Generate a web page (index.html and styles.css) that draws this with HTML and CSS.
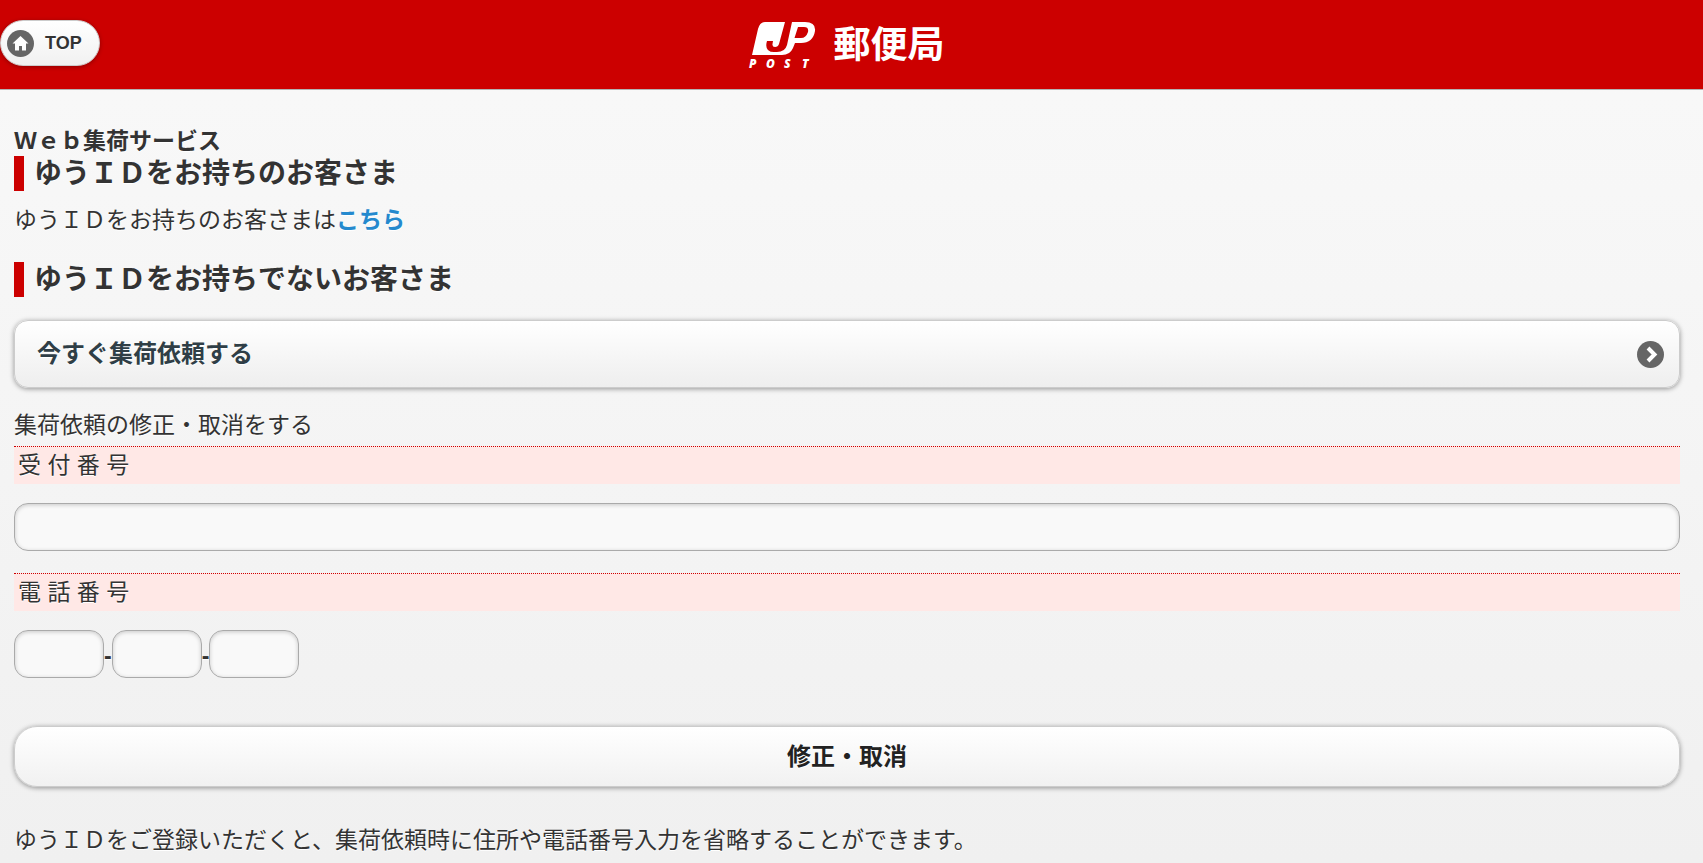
FILE: index.html
```
<!DOCTYPE html>
<html lang="ja">
<head>
  <meta charset="UTF-8">
  <meta name="viewport" content="width=device-width, initial-scale=1">
  <title>Web集荷サービス</title>
  <link rel="stylesheet" href="styles.css">
</head>
<body>
  <header class="header">
    <a class="top-btn" href="#">
      <svg class="icon" viewBox="0 0 27 27">
        <circle cx="13.5" cy="13.5" r="13.5" fill="#666"/>
        <path d="M13.5 6L5.5 13.5H8V20.5H12V16H15V20.5H19V13.5H21.5Z" fill="#fff"/>
      </svg>
      TOP
    </a>
    <h1 class="logo">
      <svg class="logo-mark" viewBox="0 0 67 50" role="img" aria-label="JP POST">
        <path d="M16 1H36L30 23Q29 26 26 26Q23 26 23.500 23L24 20H18L17.500 22Q16 31 25 31H28Q36 31 38 24L43 1H56Q67 1 66 10Q64 22 52 22H46L44 27Q41 34 33 34H3L9 8Q11 1 16 1ZM49 6L45.500 17H52Q57 17 59 11Q60 6 55 6Z" fill="#fff" fill-rule="evenodd"/>
        <text class="logo-post" x="0 17 35 53" y="47">POST</text>
      </svg>
      <span class="logo-name">郵便局</span>
    </h1>
  </header>

  <main class="content">
    <p class="service">Ｗｅｂ集荷サービス</p>
    <h2 class="title">ゆうＩＤをお持ちのお客さま</h2>
    <p class="login">ゆうＩＤをお持ちのお客さまは<a class="link" href="#">こちら</a></p>

    <h2 class="title">ゆうＩＤをお持ちでないお客さま</h2>
    <a class="list-btn" href="#">
      今すぐ集荷依頼する
      <svg class="icon" viewBox="0 0 27 27">
        <circle cx="13.5" cy="13.5" r="13.5" fill="#666"/>
        <path d="M11 7L17.500 13.500L11 20" fill="none" stroke="#fff" stroke-width="4"/>
      </svg>
    </a>

    <form class="form" action="#">
      <p class="lead">集荷依頼の修正・取消をする</p>
      <label class="label" for="number">受 付 番 号</label>
      <input class="text" id="number" type="text">
      <label class="label" for="tel1">電 話 番 号</label>
      <div class="tel">
        <input class="text" id="tel1" type="tel">-<input class="text" type="tel" aria-label="市内局番">-<input class="text" type="tel" aria-label="加入者番号">
      </div>
      <button class="submit" type="submit">修正・取消</button>
    </form>

    <p class="note">ゆうＩＤをご登録いただくと、集荷依頼時に住所や電話番号入力を省略することができます。</p>
  </main>
</body>
</html>
```

FILE: styles.css
```
* {
  box-sizing: border-box;
}
body {
  margin: 0;
  min-height: 100vh;
  font-family: "Liberation Sans", "Noto Sans CJK JP", sans-serif;
  font-size: 23px;
  line-height: 30px;
  color: #333;
  text-shadow: 0 1px 0 #fff;
  background: linear-gradient(#f9f9f9, #f0f0f0);
}
h1, h2, p {
  margin: 0;
}
.header {
  display: grid;
  grid-template-columns: 1fr auto 1fr;
  align-items: center;
  height: 90px;
  padding: 0 10px 3px 0;
  background: #c00;
  border-bottom: 1px solid #b3b3b3;
}
.icon {
  width: 27px;
  height: 27px;
}
.top-btn {
  display: flex;
  align-items: center;
  justify-self: start;
  gap: 11px;
  height: 46px;
  padding: 0 17px 0 6px;
  border: 1px solid #ccc;
  border-radius: 23px;
  background: linear-gradient(#fff, #f1f1f1);
  box-shadow: 0 1px 4px rgba(0, 0, 0, 0.3);
  font-size: 18px;
  font-weight: bold;
  color: #333;
  text-decoration: none;
}
.logo {
  display: flex;
  align-items: center;
  gap: 18px;
  padding-top: 6px;
  text-shadow: none;
  color: #fff;
}
.logo-mark {
  width: 67px;
  height: 50px;
  overflow: visible;
}
.logo-post {
  fill: #fff;
  font: italic 800 12px "Open Sans", sans-serif;
}
.logo-name {
  font-size: 37px;
  font-weight: bold;
  line-height: 48px;
}
.content {
  padding: 36px 23px 8px 14px;
}
.service {
  font-weight: bold;
}
.title {
  padding-left: 10px;
  border-left: 10px solid #c00;
  font-size: 28px;
  line-height: 35px;
}
.login {
  padding: 14px 0 27px;
}
.link {
  color: #2489ce;
  font-weight: bold;
  text-decoration: none;
}
.list-btn {
  display: flex;
  align-items: center;
  justify-content: space-between;
  height: 68px;
  margin: 23px 0 22px;
  padding: 0 15px 0 22px;
  border: 1px solid #ccc;
  border-radius: 14px;
  background: linear-gradient(#fff, #eee);
  box-shadow: 0 1px 5px rgba(0, 0, 0, 0.4);
  font-size: 24px;
  font-weight: bold;
  color: #2f3e46;
  text-decoration: none;
}
.lead {
  padding-bottom: 6px;
}
.label {
  display: block;
  padding: 3px 4px 4px;
  border-top: 1px dotted #c00;
  background: #ffe8e6;
}
.text {
  display: block;
  width: 100%;
  height: 48px;
  margin: 19px 0 22px;
  padding: 0 9px;
  border: 1px solid #aaa;
  border-radius: 14px;
  background: #f9f9f9;
  box-shadow: inset 0 1px 4px rgba(0, 0, 0, 0.2);
  font: inherit;
  color: #333;
}
.tel {
  display: flex;
  align-items: center;
  font-weight: bold;
}
.tel .text {
  width: 90px;
}
.submit {
  display: block;
  width: 100%;
  height: 61px;
  margin: 26px 0 38px;
  border: 1px solid #ccc;
  border-radius: 23px;
  background: linear-gradient(#fff, #f1f1f1);
  box-shadow: 0 1px 5px rgba(0, 0, 0, 0.4);
  font: inherit;
  font-size: 24px;
  font-weight: bold;
  color: #222;
  text-shadow: inherit;
}
```
